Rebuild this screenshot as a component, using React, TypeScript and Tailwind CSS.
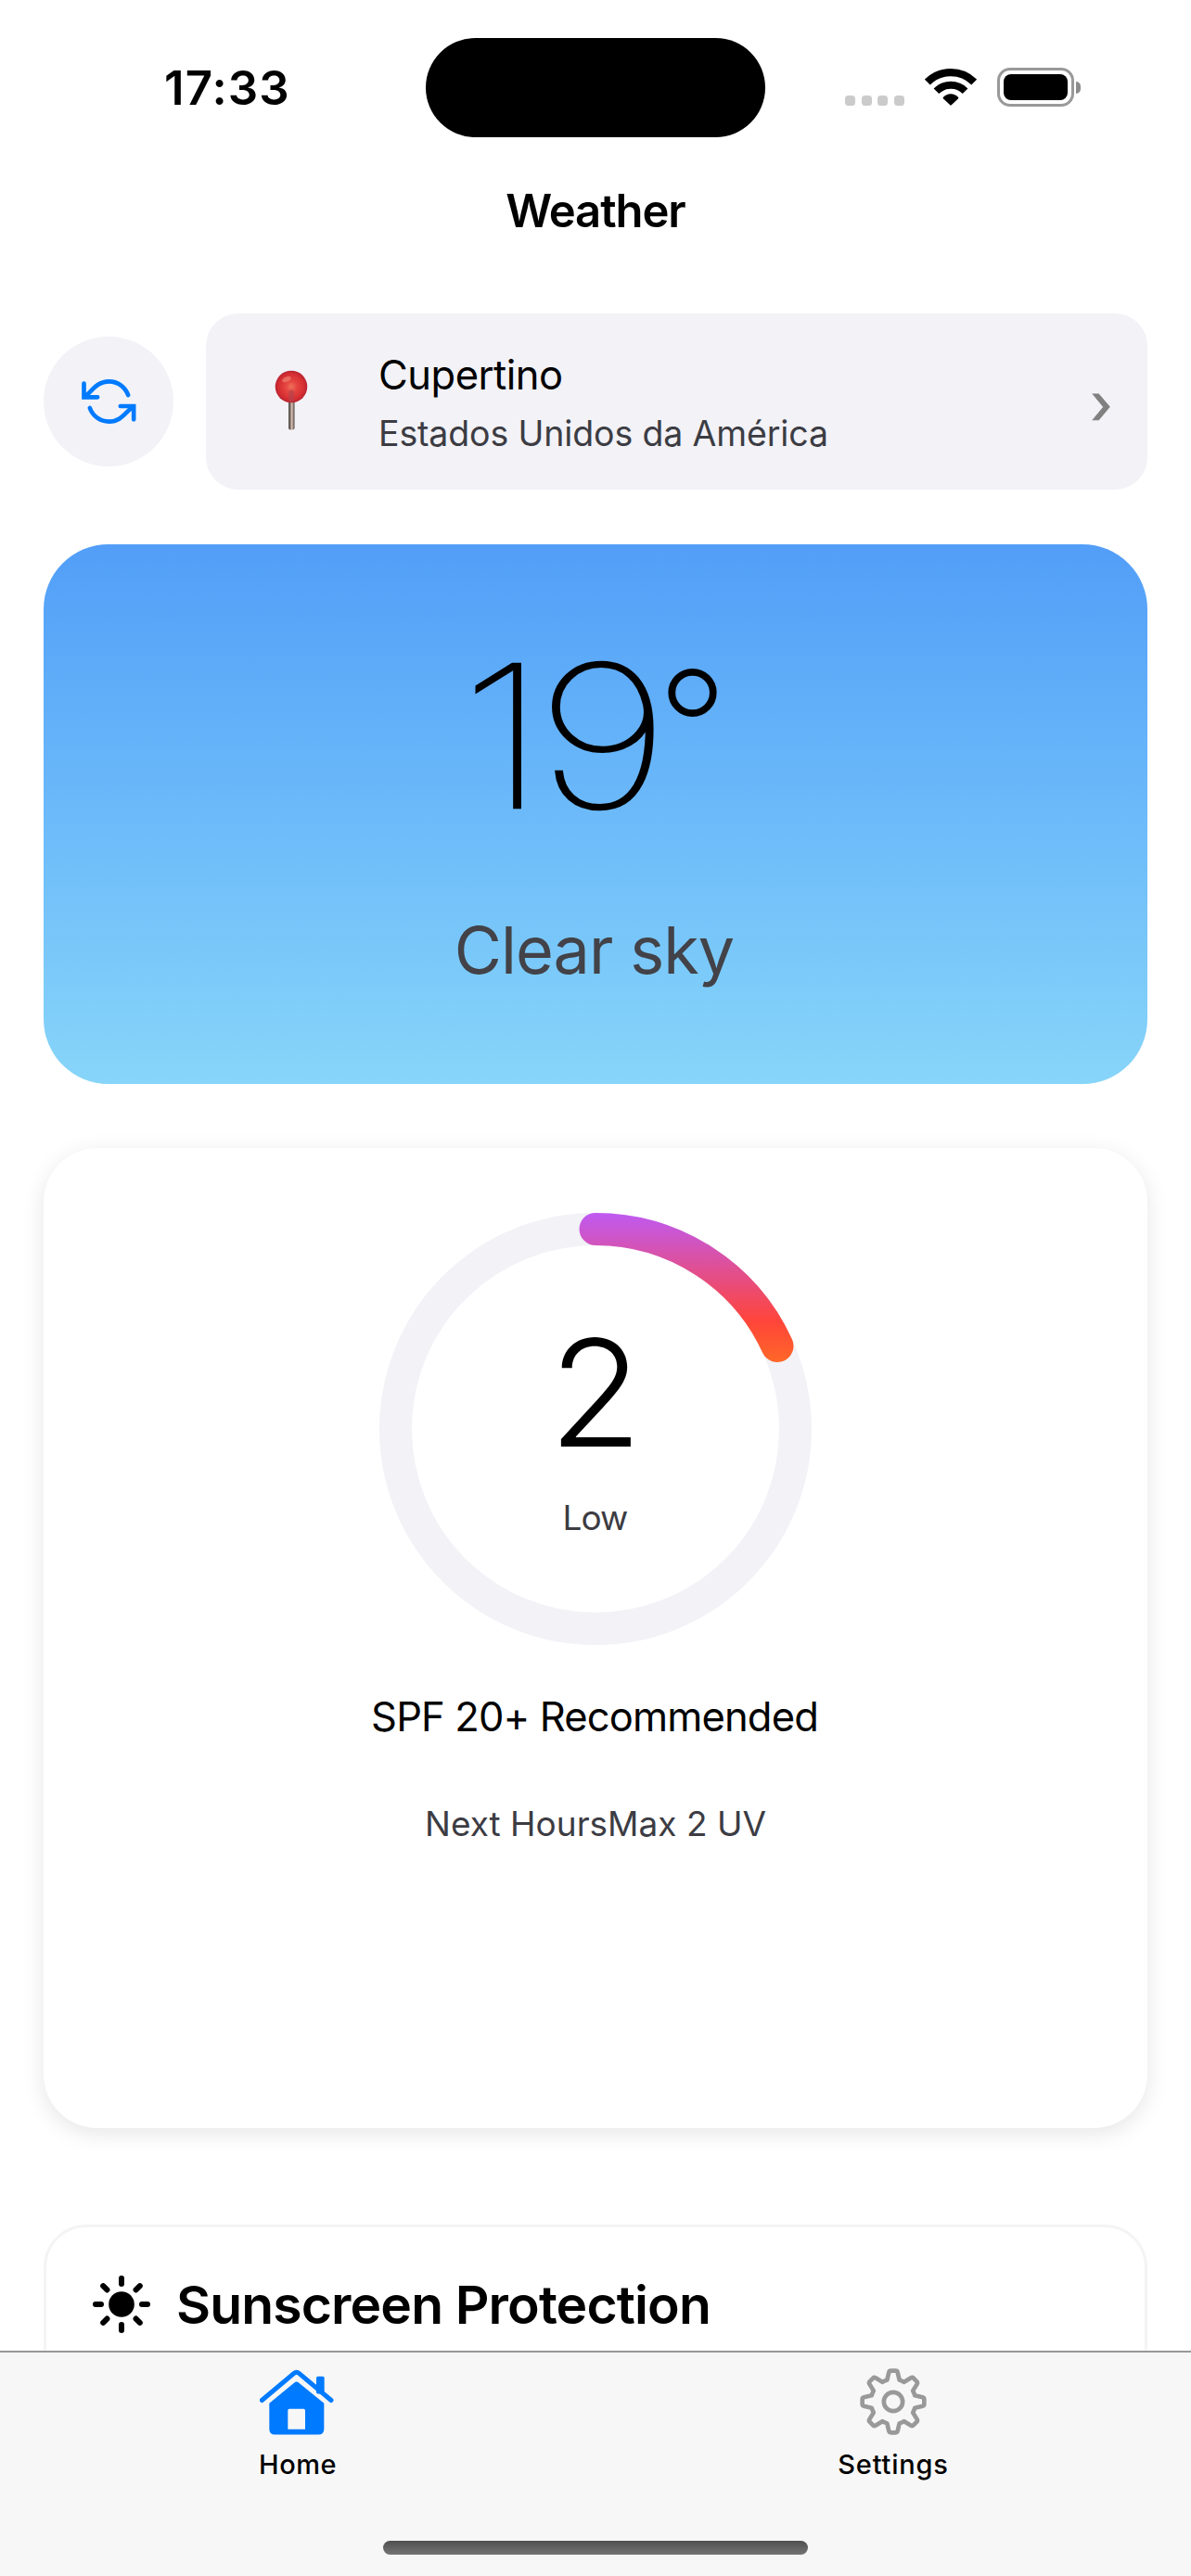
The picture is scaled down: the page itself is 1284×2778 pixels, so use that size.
import React from "react";

const GEAR_PATH =
  Array.from({ length: 8 }, (_, i) => {
    const a = (i * Math.PI) / 4;
    const rot = (x: number, y: number) =>
      `${(x * Math.cos(a) - y * Math.sin(a)).toFixed(1)} ${(x * Math.sin(a) + y * Math.cos(a)).toFixed(1)}`;
    return `${i === 0 ? "M" : "L"}${rot(-28, -67)} L${rot(-20, -70)} L${rot(-14, -95)} Q${rot(-12.5, -100)} ${rot(-8, -100)} L${rot(8, -100)} Q${rot(12.5, -100)} ${rot(14, -95)} L${rot(20, -70)}`;
  }).join(" ") + " Z";

function StatusBar() {
  return (
    <div className="flex h-[188px] shrink-0 items-center">
      <div className="w-[459px] pl-[177px] text-[51px] leading-none font-semibold tracking-[1.1px]">17:33</div>
      <div className="h-[107px] w-[366px] shrink-0 rounded-full bg-black" />
      <div className="flex h-[107px] items-center pl-[86px]">
        <div className="mt-[28px] flex gap-[6.6px]">
          {[0, 1, 2, 3].map((i) => (
            <div key={i} className="size-[11px] rounded-[3.5px] bg-[#cbcbcb]" />
          ))}
        </div>
        <svg className="ml-[22px] -mt-px h-[41px] w-[56px]" viewBox="410 97 168 123">
          <g fill="none" stroke="#000">
            <path d="M418.300 143.800 A107 107 0 0 1 569.700 143.800" strokeWidth="25" />
            <path d="M447.300 172.800 A66 66 0 0 1 540.700 172.800" strokeWidth="24" />
          </g>
          <path d="M469.500 193 Q480 182 494 182 Q508 182 518.500 193 Q520 195 518.500 197 L496 218 Q494 220 492 218 L469.500 197 Q468 195 469.500 193Z" />
        </svg>
        <div className="ml-[22px] flex items-center">
          <div className="h-[42px] w-[83px] rounded-[14px] border-[3px] border-[#999] p-[4px]">
            <div className="h-full w-full rounded-[8px] bg-black" />
          </div>
          <div className="ml-[2px] h-[13px] w-[5px] rounded-r-full bg-[#8c8c8c]" />
        </div>
      </div>
    </div>
  );
}

function RefreshIcon() {
  return (
    <svg className="h-[52px] w-[61px]" viewBox="49.500 52 183 156" fill="none" stroke="#007aff" strokeWidth="14" strokeLinecap="round">
      <path d="M203 109 C193 82 169 65 141 65 C106 65 92 88 66 112" />
      <path d="M60 72 V116 H104" />
      <path d="M79 151 C89 178 113 195 141 195 C176 195 190 172 216 148" />
      <path d="M221 188 V145 H178" />
    </svg>
  );
}

function PinIcon() {
  return (
    <svg className="mb-[2px] h-[66px] w-[36px]" viewBox="0 0 36 66">
      <defs>
        <linearGradient id="pin-stem">
          <stop offset="0" stopColor="#5f5751" />
          <stop offset="0.25" stopColor="#6b625c" />
          <stop offset="0.55" stopColor="#d8c0b2" />
          <stop offset="0.75" stopColor="#a18d83" />
          <stop offset="1" stopColor="#4b4340" />
        </linearGradient>
        <radialGradient id="pin-head" cx="0.5" cy="0.5" r="0.52">
          <stop offset="0" stopColor="#f0705c" />
          <stop offset="0.35" stopColor="#e5443f" />
          <stop offset="0.75" stopColor="#d62f33" />
          <stop offset="1" stopColor="#b32230" />
        </radialGradient>
      </defs>
      <rect x="15" y="32" width="6.500" height="32.500" rx="2" fill="url(#pin-stem)" />
      <circle cx="18" cy="18" r="17.300" fill="url(#pin-head)" />
      <ellipse cx="13" cy="10" rx="5" ry="2.600" fill="#f59a88" opacity="0.5" transform="rotate(-25 13 10)" />
      <path d="M15.200 23 Q18 20 21 23 L20.500 34 H15.500Z" fill="#b3434c" opacity="0.7" />
    </svg>
  );
}

function UvRing() {
  return (
    <svg className="h-[466px] w-[466px]" viewBox="0 0 466 466" fill="none" strokeWidth="35">
      <defs>
        <linearGradient id="uv" gradientUnits="userSpaceOnUse" x1="233" y1="0" x2="233" y2="466">
          <stop offset="0" stopColor="#bf5af2" />
          <stop offset="0.25" stopColor="#ff453a" />
          <stop offset="0.5" stopColor="#ff9f0a" />
          <stop offset="0.75" stopColor="#ffd60a" />
          <stop offset="1" stopColor="#30d158" />
        </linearGradient>
      </defs>
      <circle cx="233" cy="233" r="215.500" stroke="#f2f2f7" />
      <path d="M233 17.500 A215.500 215.500 0 0 1 429 143.500" stroke="url(#uv)" strokeLinecap="round" />
    </svg>
  );
}

function SunIcon() {
  return (
    <svg className="size-[64px]" viewBox="-96 -96 192 192">
      <circle r="41.500" />
      <g stroke="#000" strokeWidth="18" strokeLinecap="round">
        {[0, 45, 90, 135, 180, 225, 270, 315].map((a) => (
          <path key={a} d="M0 -66 V-84" transform={`rotate(${a})`} />
        ))}
      </g>
    </svg>
  );
}

function HomeIcon() {
  return (
    <svg className="mr-[2px] h-[71px] w-[80px]" viewBox="120 106.500 240 213" fill="#007aff">
      <rect x="303" y="130" width="26" height="56" rx="5" />
      <path d="M127 207 L231 119.500 Q239 113 247 119.500 L351 207" fill="none" stroke="#007aff" strokeWidth="15" strokeLinecap="round" />
      <path
        fillRule="evenodd"
        d="M151 217 L232 150 Q239 144 246 150 L328 217 V300 Q328 318 310 318 H169 Q151 318 151 300Z M216 235 Q211 235 211 240 V301 H267 V240 Q267 235 262 235Z"
      />
    </svg>
  );
}

function GearIcon() {
  return (
    <svg className="size-[72px]" viewBox="-108 -108 216 216" fill="none" stroke="#999" strokeWidth="14" strokeLinejoin="round">
      <path d={GEAR_PATH} />
      <circle r="30.500" />
    </svg>
  );
}

function Tab({ icon, label, className }: { icon: React.ReactNode; label: string; className: string }) {
  return (
    <div className="flex flex-1 flex-col items-center">
      <div className="flex h-[72px] items-center">{icon}</div>
      <span className={`mt-[12px] text-[29px] leading-[40px] font-medium ${className}`}>{label}</span>
    </div>
  );
}

export default function App() {
  return (
    <div className="h-[2778px] w-[1284px] overflow-hidden bg-white font-[Inter,sans-serif] text-black">
      <div className="flex h-[2535px] flex-col overflow-hidden">
        <StatusBar />
        <h1 className="shrink-0 text-center text-[49px] leading-[79px] font-semibold tracking-[-1.08px]">Weather</h1>

        <div className="mt-[71px] flex shrink-0 items-center gap-[35px] px-[47px]">
          <button className="flex size-[140px] shrink-0 items-center justify-center rounded-full bg-[#f2f2f7]">
            <RefreshIcon />
          </button>
          <div className="flex h-[190px] flex-1 items-center rounded-[35px] bg-[#f2f2f7] pr-[38px] pl-[74px]">
            <PinIcon />
            <div className="ml-[76px] flex flex-1 flex-col pt-[4px]">
              <span className="text-[43.5px] leading-[64px] tracking-[-0.5px]">Cupertino</span>
              <span className="text-[37.5px] leading-[63px] tracking-[-0.14px] text-[#3c3c43]">Estados Unidos da América</span>
            </div>
            <span className="mt-[3px] text-[60px] leading-[60px] text-[#808080] [-webkit-text-stroke:1px_#808080]">›</span>
          </div>
        </div>

        <div className="mx-[47px] mt-[59px] h-[582px] shrink-0 rounded-[70px] bg-linear-to-b from-[#529ef8] to-[#87d5f9] pt-[90px]">
          <div className="flex pl-[449px] text-[213px] leading-[233px] font-thin">
            <span className="origin-left scale-x-[1.19] tracking-[-9px] [-webkit-text-stroke:2.6px_#000]">
              1<span className="tracking-[-13px]">9</span>
            </span>
            <span className="relative top-[-10px] ml-[37px] text-[163px] [-webkit-text-stroke:4px_#000]">°</span>
          </div>
          <p className="mt-[73px] pr-[3px] text-center text-[70px] leading-[84px] tracking-[-0.91px] text-[#424248]">Clear sky</p>
        </div>

        <div className="mx-[47px] mt-[69px] flex h-[1057px] shrink-0 flex-col items-center rounded-[58px] bg-white pt-[70px] shadow-[0_6px_24px_rgba(0,0,0,0.1)]">
          <div className="grid place-items-center [&>*]:[grid-area:1/1]">
            <UvRing />
            <div className="flex h-[466px] flex-col items-center pt-[104px]">
              <span className="scale-x-[1.03] text-[160px] leading-[180px] font-light">2</span>
              <span className="mt-[25px] pr-px text-[37px] leading-[40px] tracking-[-0.97px] text-[#3c3c43]">Low</span>
            </div>
          </div>
          <p className="mt-[47px] pr-[2px] text-[43.5px] leading-[60px] tracking-[-0.86px]">SPF 20+ Recommended</p>
          <p className="mt-[60px] text-[37px] leading-[52px] text-[#3c3c43]">Next HoursMax 2 UV</p>
        </div>

        <div className="mx-[47px] mt-[104px] flex h-[300px] shrink-0 items-start rounded-[46px] border-[3px] border-[#f4f4f5] pt-[51px] pl-[49px]">
          <SunIcon />
          <h2 className="ml-[27px] text-[57px] leading-[66px] font-semibold tracking-[-0.87px]">Sunscreen Protection</h2>
        </div>
      </div>

      <nav className="flex h-[243px] flex-col items-center border-t-2 border-[#98989a] bg-[#f7f7f7] pt-[17px]">
        <div className="flex w-full">
          <Tab icon={<HomeIcon />} label="Home" className="tracking-[0.5px]" />
          <Tab icon={<GearIcon />} label="Settings" className="tracking-[0.8px]" />
        </div>
        <div className="mt-[62px] h-[15px] w-[458px] rounded-full bg-linear-to-b from-[#505050] to-[#757575]" />
      </nav>
    </div>
  );
}
